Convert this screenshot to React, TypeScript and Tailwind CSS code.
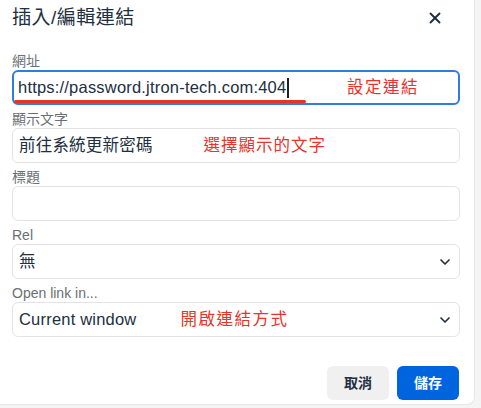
import { ChevronDown, X } from "lucide-react";

const font = { fontFamily: '"Liberation Sans", "Noto Sans CJK TC", sans-serif' };

function Field({ label, children }: { label: string; children: React.ReactNode }) {
  return (
    <div className="flex flex-col">
      <span className="text-[14px] leading-[16px] text-[#6b6f75] mb-[1px]">{label}</span>
      {children}
    </div>
  );
}

function Box({ children, focus }: { children?: React.ReactNode; focus?: boolean }) {
  return (
    <div
      className={
        "relative flex items-center h-[35px] rounded-[6px] text-[16.5px] tracking-[0.2px] text-[#222f3e] " +
        (focus ? "border-2 border-[#2f7de1] px-[4px]" : "border border-[#e3e3e3] px-[6px]")
      }
    >
      {children}
    </div>
  );
}

export default function App() {
  return (
    <div className="w-[481px] h-[408px] bg-[#f4f4f4] flex" style={font}>
      <div className="w-[475px] h-[405px] bg-white rounded-br-[8px] border-r border-b border-[#e6e6e6] flex flex-col">
        {/* header */}
        <div className="flex items-center justify-between h-[36px] pl-[12px] pr-[30px]">
          <h1 className="text-[19px] text-[#222f3e] tracking-[0.5px]">插入/編輯連結</h1>
          <X className="w-[18px] h-[18px] text-[#222f3e]" strokeWidth={2.5} />
        </div>

        <div className="flex flex-col gap-[6px] pl-[12px] pr-[14px] pt-[17px]">
          <Field label="網址">
            <Box focus>
              <span>https://password.jtron-tech.com:404</span>
              <span className="w-[1.5px] h-[20px] bg-[#222] ml-[1px]" />
              <span className="text-[#e8332a] ml-[58px] tracking-[1.5px]">設定連結</span>
              <span className="absolute left-[0px] top-[28px] w-[292px] h-[3px] bg-[#e8332a] rounded-full" />
            </Box>
          </Field>
          <Field label="顯示文字">
            <Box>
              <span>前往系統更新密碼</span>
              <span className="text-[#e8332a] ml-[51px] tracking-[1px]">選擇顯示的文字</span>
            </Box>
          </Field>
          <Field label="標題">
            <Box />
          </Field>
          <Field label="Rel">
            <Box>
              <span className="flex-1">無</span>
              <ChevronDown className="w-[16px] h-[16px] text-[#222f3e] mr-[0px]" strokeWidth={2.5} />
            </Box>
          </Field>
          <Field label="Open link in...">
            <Box>
              <span>Current window</span>
              <span className="text-[#e8332a] ml-[44px] flex-1 tracking-[1.5px]">開啟連結方式</span>
              <ChevronDown className="w-[16px] h-[16px] text-[#222f3e] mr-[0px]" strokeWidth={2.5} />
            </Box>
          </Field>
        </div>

        <div className="flex justify-end gap-[8px] pr-[15px] mt-auto mb-[4px]">
          <button className="w-[62px] h-[34px] rounded-[6px] bg-[#f0f0f0] text-[14px] font-bold text-[#222f3e]">
            取消
          </button>
          <button className="w-[62px] h-[34px] rounded-[6px] bg-[#0064de] text-[14px] font-bold text-white">
            儲存
          </button>
        </div>
      </div>
    </div>
  );
}
